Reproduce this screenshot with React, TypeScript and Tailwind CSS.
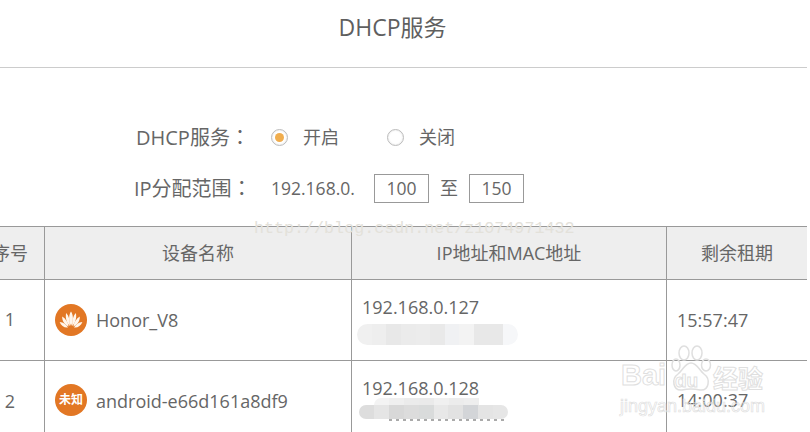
const fontStack = "font-['Open_Sans','Noto_Sans_CJK_SC',sans-serif]";

const Radio = ({ checked }: { checked?: boolean }) => (
    <span className="w-[17px] h-[17px] rounded-full border border-[#bbbbbb] bg-white flex items-center justify-center shadow-[inset_0_0_2px_#dddddd]">
        {checked && <span className="w-[9px] h-[9px] rounded-full bg-[#f0ad4e]" />}
    </span>
);

const RangeBox = ({ value }: { value: string }) => (
    <span className="w-[55px] h-[29px] border border-[#999999] flex items-center justify-center">{value}</span>
);

// blurred out MAC address
const Mosaic = ({ tones, className }: { tones: string[]; className: string }) => (
    <div className={`flex rounded-full overflow-hidden ${className}`}>
        {tones.map((tone, i) => (
            <div key={i} className="flex-1 h-full" style={{ backgroundColor: tone }} />
        ))}
    </div>
);

const HuaweiIcon = () => (
    <span className="w-[32px] h-[32px] rounded-full bg-[#e27724] flex items-center justify-center shrink-0">
        <svg width="24" height="18" viewBox="0 0 24 18" fill="#fff6ec">
            <path d="M12 15 C9.6 10 9.4 4.5 12 0.5 C14.6 4.5 14.4 10 12 15Z" />
            <path d="M10.8 15 C7.6 12 6 6.5 7.2 2 C10 5 11.2 10 10.8 15Z" />
            <path d="M13.2 15 C16.4 12 18 6.5 16.8 2 C14 5 12.8 10 13.2 15Z" />
            <path d="M9.6 15.4 C5.6 14 3 10 3.2 5.6 C6.6 7.6 9 11.4 9.6 15.4Z" />
            <path d="M14.4 15.4 C18.4 14 21 10 20.8 5.6 C17.4 7.6 15 11.4 14.4 15.4Z" />
            <path d="M9 16.4 C5.6 17 2 15 0.6 11 C4.4 11.4 7.4 13.6 9 16.4Z" />
            <path d="M15 16.4 C18.4 17 22 15 23.4 11 C19.6 11.4 16.6 13.6 15 16.4Z" />
        </svg>
    </span>
);

const UnknownIcon = () => (
    <span className="w-[32px] h-[32px] rounded-full bg-[#e27724] flex items-center justify-center shrink-0 text-white text-[12px] font-bold leading-none">
        未知
    </span>
);

const App = () => {
    return (
        <div className={`relative w-[810px] h-[432px] overflow-hidden bg-white text-[#666666] ${fontStack}`}>
            <header className="w-[807px] h-[68px] border-b border-[#cccccc] flex items-center justify-center pb-[13px] pr-[22px] text-[23px] text-[#5f5f5f]">
                DHCP服务
            </header>

            <div className="w-[807px] h-[158px] pl-[135px] pt-[54px] text-[18px]">
                <div className="flex items-center h-[31px]">
                    <span className="w-[136px] pl-px text-[20px] whitespace-nowrap">DHCP服务<span className="font-['Noto_Sans_CJK_TC']">：</span></span>
                    <Radio checked />
                    <span className="ml-[15px]">开启</span>
                    <span className="ml-[48px]"><Radio /></span>
                    <span className="ml-[15px]">关闭</span>
                </div>
                <div className="flex items-center h-[32px] mt-[19px] text-[17.5px]">
                    <span className="w-[136px] -ml-px text-[20px] whitespace-nowrap">IP分配范围<span className="font-['Noto_Sans_CJK_TC']">：</span></span>
                    <span className="w-[104px] pl-px">192.168.0.</span>
                    <RangeBox value="100" />
                    <span className="w-[40px] text-center text-[18px]">至</span>
                    <RangeBox value="150" />
                </div>
            </div>

            <div className="w-[807px] overflow-hidden">
                <div className="grid grid-cols-[68px_307px_315px_141px] w-[831px] -ml-[24px] border-t border-[#999999] text-[18px]">
                    <div className="h-[53px] bg-[#eeeeee] border-b border-[#999999] flex items-center justify-center whitespace-nowrap">序号</div>
                    <div className="h-[53px] bg-[#eeeeee] border-b border-l border-[#999999] flex items-center justify-center">设备名称</div>
                    <div className="h-[53px] bg-[#eeeeee] border-b border-l border-[#999999] flex items-center justify-center">IP地址和MAC地址</div>
                    <div className="h-[53px] bg-[#eeeeee] border-b border-l border-[#999999] flex items-center justify-center">剩余租期</div>

                    <div className="h-[81px] border-b border-[#999999] flex items-center justify-center pb-px">1</div>
                    <div className="h-[81px] border-b border-l border-[#999999] flex items-center pl-[10px] gap-[9px]">
                        <HuaweiIcon />
                        <span>Honor_V8</span>
                    </div>
                    <div className="h-[81px] border-b border-l border-[#999999] pl-[10px] pt-[15px]">
                        <div className="leading-[24px]">192.168.0.127</div>
                        <div className="-ml-[5px] mt-[5px]">
                            <Mosaic className="w-[161px] h-[21px]" tones={["#f0f0f0", "#eeeeee", "#e8e8e8", "#ebebeb", "#ececec", "#e9e9e9", "#f0f1f3", "#f3f3f3", "#e8e8e8", "#e8e8e8", "#f6f7f9"]} />
                        </div>
                    </div>
                    <div className="h-[81px] border-b border-l border-[#999999] flex items-center pl-[10px]">15:57:47</div>

                    <div className="h-[72px] flex items-start justify-center pt-[27px]">2</div>
                    <div className="h-[72px] border-l border-[#999999] flex items-start pt-[23px] pl-[10px] gap-[9px]">
                        <UnknownIcon />
                        <span className="leading-[34px] whitespace-nowrap">android-e66d161a8df9</span>
                    </div>
                    <div className="h-[72px] border-l border-[#999999] pl-[10px] pt-[15px]">
                        <div className="leading-[24px]">192.168.0.128</div>
                        <div className="-ml-[3px] -mt-[2px]">
                            <div className="ml-[15px] w-[105px] h-[7px] flex rounded-tl-full overflow-hidden">
                                {["#f3f3f3", "#efefef", "#ebebeb", "#eaeaea", "#f0f0f0", "#ececec", "#eeeeee"].map((tone, i) => (
                                    <div key={i} className="flex-1" style={{ backgroundColor: tone }} />
                                ))}
                            </div>
                            <Mosaic className="w-[149px] h-[14px]" tones={["#dddddd", "#e5e5e5", "#d8d8d8", "#dcdcdc", "#d9dbdb", "#e8e8e8", "#e2e2e2", "#d3d5d8", "#e4e4e4", "#e6e6e6"]} />
                            <div className="ml-[30px] w-[118px] h-[2px] bg-[repeating-linear-gradient(90deg,#aaaaaa_0_3px,transparent_3px_7px)]" />
                        </div>
                    </div>
                    <div className="h-[72px] border-l border-[#999999] pl-[10px] pt-[26px]">14:00:37</div>
                </div>
            </div>

            {/* CSDN watermark */}
            <span className="absolute left-[254px] top-[216px] font-['Liberation_Mono',monospace] text-[16.7px] text-[#e3e1da] whitespace-nowrap">
                http://blog.csdn.net/z1074971432
            </span>

            {/* Baidu watermark */}
            <div className="absolute left-[620px] top-[345px] w-[170px] h-[87px]">
                <svg className="absolute left-[50px] top-0" width="42" height="47" viewBox="0 0 42 47" fill="none" stroke="#dfdfdf" strokeWidth="1.5">
                    <ellipse cx="6" cy="20" rx="4" ry="6" />
                    <ellipse cx="14" cy="8" rx="5" ry="7" />
                    <ellipse cx="27" cy="8" rx="5" ry="7" />
                    <ellipse cx="36" cy="20" rx="4.5" ry="6" />
                    <path d="M21 18 C15 18 13 25 8 29 C1 34 3 46 12 45 C17 44 25 44 30 45 C39 46 41 34 34 29 C29 25 27 18 21 18Z" />
                </svg>
                <span className="absolute left-[1px] top-[14px] text-[29px] leading-[32px] font-['Liberation_Sans',sans-serif] font-bold text-transparent [-webkit-text-stroke:1px_#dfdfdf]">Bai</span>
                <span className="absolute left-[55px] top-[24px] text-[19px] leading-[24px] font-['Liberation_Sans',sans-serif] font-bold text-transparent [-webkit-text-stroke:1px_#dfdfdf]">du</span>
                <span className="absolute left-[93px] top-[18px] text-[25px] leading-[30px] font-bold text-transparent [-webkit-text-stroke:1px_#dfdfdf] whitespace-nowrap">经验</span>
                <span className="absolute left-0 top-[51px] text-[18px] leading-[20px] font-['Liberation_Sans',sans-serif] text-transparent [-webkit-text-stroke:0.7px_#dfdfdf] whitespace-nowrap">jingyan.baidu.com</span>
            </div>
        </div>
    );
};

export default App;
